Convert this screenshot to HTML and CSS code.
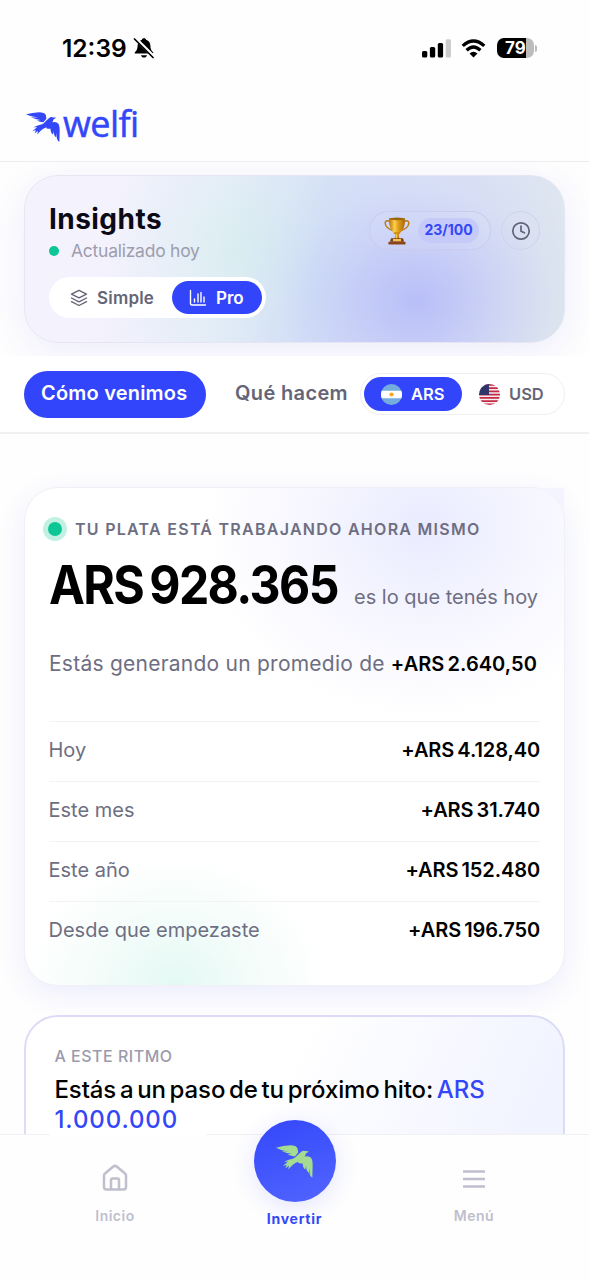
FILE: index.html
```html
<!DOCTYPE html>
<html lang="es">
<head>
<meta charset="utf-8">
<title>welfi</title>
<link rel="stylesheet" href="styles.css">
</head>
<body>
<svg class="defs" width="0" height="0">
  <defs>
    <linearGradient id="gold" x1="0" x2="1"><stop offset="0" stop-color="#b8730b"/><stop offset=".35" stop-color="#fbd04a"/><stop offset=".6" stop-color="#e09a17"/><stop offset="1" stop-color="#a9660a"/></linearGradient>
    <symbol id="bird" viewBox="0 0 110 98">
      <path d="M0 8Q22 2 42 1Q60 1 64 10L66 22L56 34Q46 33 34 28Q40 28 46 26Q30 25 16 17Q26 19 40 19Q16 17 0 8Z"/>
      <path d="M98 19L89 25Q87 32 84 36Q76 40 68 49Q56 53 50 59L36 73L39 62L28 69L32 59L20 63Q32 53 36 49Q30 50 24 50Q38 43 52 40Q58 37 62 32Q70 24 76 19Q81 15 88 18Z"/>
      <path d="M66 47Q76 38 86 34Q98 31 104 38Q109 44 109 60L108 97Q102 94 100 86L99 68L98 83Q91 78 90 70L90 62L87 73Q81 70 80 62L79 54Q74 56 66 53Z"/>
    </symbol>
  </defs>
</svg>
<div class="phone">
  <div class="status">
    <span class="clock">12:39</span>
    <svg class="bell" viewBox="0 0 22 22"><path d="M11 1.200c1.300 0 1.900.7 2.100 1.500c2.900.9 4.200 3 4.300 6 .1 3.200.8 4.600 2.800 6.500v1.300H1.800v-1.300c2-1.900 2.700-3.300 2.800-6.500.1-3 1.400-5.100 4.300-6 .2-.8.8-1.500 2.100-1.500z"/><path d="M8 18.200h6c-.4 1.500-1.500 2.300-3 2.300s-2.600-.8-3-2.300z"/><path d="M2.500 1.500L21 20" stroke="#fff" stroke-width="3.400"/><path d="M1.500 2L20 20.500" stroke="#000" stroke-width="1.700" stroke-linecap="round"/></svg>
    <span class="grow"></span>
    <svg class="signal" viewBox="0 0 29 19"><rect x="0" y="12" width="5.300" height="6.500" rx="1.500"/><rect x="7.900" y="8" width="5.300" height="10.500" rx="1.500"/><rect x="15.800" y="4" width="5.300" height="14.500" rx="1.500"/><rect x="23.700" y="0.300" width="5.300" height="18.200" rx="1.500" fill="#ccc"/></svg>
    <svg class="wifi" viewBox="0 0 24 19"><g fill="none" stroke="#000" stroke-width="3.300"><path d="M1.200 6.900Q12-3 22.800 6.900"/><path d="M5.100 11.200Q12 4.700 18.900 11.200"/></g><path d="M12 18.600L8 14.400Q12 10.900 16 14.400z"/></svg>
    <span class="battery"><b>79</b></span><i class="cap"></i>
  </div>
  <header class="brand">
    <svg class="brandbird"><use href="#bird"/></svg><span class="word">welfi</span>
  </header>
  <section class="hero">
    <div class="insights">
      <div class="heading">
        <div>
          <h1>Insights</h1>
          <p class="updated"><i></i><span>Actualizado hoy</span></p>
        </div>
        <div class="tools">
          <span class="score">
            <svg class="trophy" viewBox="0 0 26 28"><path d="M6 4.500Q1 2.500 1.200 6.500Q2 11.500 9 13.500M20 4.500Q25 2.500 24.800 6.500Q24 11.500 17 13.500" fill="none" stroke="#b97a14" stroke-width="1.500"/><path d="M5 1.500h16q.3 11-5.500 14.500h-5Q4.700 12.500 5 1.500z" fill="url(#gold)"/><ellipse cx="13" cy="1.900" rx="8" ry="1.300" fill="#9c650c"/><path d="M11.500 15.500h3l.8 6.500h-4.600z" fill="url(#gold)"/><rect x="9.500" y="15.300" width="7" height="1.600" rx=".8" fill="#d18a12"/><path d="M7 21.300h12l1 3.500H6z" fill="#7d3c12"/><rect x="9" y="22" width="8" height="2.300" fill="#f3c455"/><rect x="4.500" y="24.700" width="17" height="2.800" rx=".6" fill="#8b451a"/></svg>
            <b>23/100</b>
          </span>
          <span class="history"><svg viewBox="0 0 20 20"><circle cx="10" cy="10" r="8.200"/><path d="M10 5V10.300l3.400 1.500"/></svg></span>
        </div>
      </div>
      <div class="mode">
        <span class="opt simple"><svg viewBox="0 0 18 18"><path d="M9 1.300l7.500 3.800L9 8.900 1.500 5.100zM1.500 9L9 12.800 16.500 9M1.500 12.700L9 16.500l7.500-3.800"/></svg><span>Simple</span></span>
        <span class="opt pro"><svg viewBox="0 0 18 18"><path d="M1.500 1.500v13q0 1.500 1.500 1.500h13.500M5.500 10v3M9 5v8M12 3.500V13M15 8v5"/></svg><span>Pro</span></span>
      </div>
    </div>
  </section>
  <nav class="tabs">
    <span class="tab on">Cómo venimos</span>
    <span class="tab off">Qué hacem</span>
    <div class="currency">
      <span class="cur sel"><svg viewBox="0 0 20 20"><circle cx="10" cy="10" r="10" fill="#74addd"/><path d="M.6 6.500h18.800a10 10 0 0 1 0 7H.6a10 10 0 0 1 0-7z" fill="#fff"/><circle cx="10" cy="10" r="2" fill="#f5a623"/></svg><span>ARS</span></span>
      <span class="cur"><svg viewBox="0 0 20 20"><clipPath id="round"><circle cx="10" cy="10" r="10"/></clipPath><g clip-path="url(#round)"><path fill="#f4eef0" d="M0 0h20v20H0z"/><path d="M0 .8h20M0 3.900h20M0 7h20M0 10.100h20M0 13.200h20M0 16.300h20M0 19.400h20" stroke="#c62a43" stroke-width="1.600"/><path fill="#303569" d="M0 0h9.500v10.500H0z"/></g></svg><span>USD</span></span>
    </div>
  </nav>
  <main>
    <section class="card money">
      <p class="live"><i></i><span>TU PLATA ESTÁ TRABAJANDO AHORA MISMO</span></p>
      <p class="total"><strong>ARS 928.365</strong><span>es lo que tenés hoy</span></p>
      <p class="avg"><span>Estás generando un promedio de</span><b>+ARS 2.640,50</b></p>
      <dl>
        <div><dt>Hoy</dt><dd>+ARS 4.128,40</dd></div>
        <div><dt>Este mes</dt><dd>+ARS 31.740</dd></div>
        <div><dt>Este año</dt><dd>+ARS 152.480</dd></div>
        <div><dt>Desde que empezaste</dt><dd>+ARS 196.750</dd></div>
      </dl>
    </section>
    <section class="card pace">
      <p class="eyebrow">A ESTE RITMO</p>
      <p class="goal">Estás a un paso de tu próximo hito: <em>ARS</em></p>
      <p class="goal amount"><em>1.000.000</em></p>
    </section>
  </main>
  <footer class="dock">
    <div class="item"><svg class="home" viewBox="0 0 26 28"><path d="M2 11.500Q2 10.300 3 9.500L11.300 2.500Q13 1.200 14.700 2.500L23 9.500q1 .8 1 2V23q0 2.500-2.500 2.500h-17Q2 25.500 2 23zM9 25.500V16q0-1.500 1.500-1.500h5q1.500 0 1.500 1.500v9.500"/></svg><span>Inicio</span></div>
    <div class="item invest"><span class="disc"><svg><use href="#bird"/></svg></span><span>Invertir</span></div>
    <div class="item"><svg class="burger" viewBox="0 0 22 18"><path d="M0 1.500h22M0 9h22M0 16.500h22"/></svg><span>Menú</span></div>
  </footer>
</div>
</body>
</html>
```
FILE: styles.css
```css
* { box-sizing: border-box; margin: 0; padding: 0; }
body { width: 589px; height: 1280px; overflow: hidden; background: #fefefe; font-family: Inter, "Liberation Sans", sans-serif; color: #0b0b18; white-space: nowrap; }
.defs { position: absolute; }
.phone { display: flex; flex-direction: column; height: 1280px; }

.status { display: flex; align-items: center; height: 96px; padding: 0 52px 0 62px; }
.clock { font-size: 24.500px; font-weight: 600; color: #000; }
.bell { width: 22px; height: 22px; margin-left: 6px; }
.grow { flex: 1; }
.signal { width: 29px; height: 19px; }
.wifi { width: 25px; height: 19px; margin: 0 11px 0 10px; }
.battery { display: flex; width: 37px; height: 20px; border-radius: 7px; background: linear-gradient(90deg, #000 78%, #bcbcbc 78%); color: #fff; font-size: 17px; line-height: 20px; justify-content: center; }
.cap { width: 2px; height: 7px; margin-left: 1px; border-radius: 0 2px 2px 0; background: #bcbcbc; }

.brand { display: flex; height: 66px; padding: 14px 26px 0; border-bottom: 1px solid #ececef; color: #3347f8; }
.brandbird { width: 34px; height: 34px; fill: #3347f8; }
.word { margin-left: 3px; font: 500 36px/27px "Open Sans", sans-serif; letter-spacing: -.6px; -webkit-text-stroke: .5px #3347f8; }

.hero { height: 194px; padding: 13px 24px; overflow: hidden; }
.insights { height: 168px; padding: 27px 24px 0; border: 1px solid #e6e6f3; border-radius: 34px; background: radial-gradient(ellipse 180px 150px at 392px 125px, rgba(145,150,250,.45), rgba(160,165,250,.24) 45%, rgba(170,175,250,.07) 75%, transparent), radial-gradient(ellipse 130px 150px at 215px 75px, rgba(205,240,232,.5), rgba(205,240,232,.2) 50%, transparent), linear-gradient(100deg, #f4f2fd 15%, #e9edfa 36%, #d6e0f7 54%, #dae1f5 78%, #dfe7ee 100%); box-shadow: 0 8px 36px rgba(80,80,240,.1); }
.heading { display: flex; justify-content: space-between; }
h1 { font-size: 28px; line-height: 32px; letter-spacing: .45px; }
.updated { display: flex; align-items: center; gap: 12px; height: 31px; font-size: 17.500px; letter-spacing: -.25px; color: #9d9dae; }
.updated i { width: 10px; height: 10px; border-radius: 50%; background: #0cc795; }
.tools { display: flex; gap: 10px; padding-top: 8px; }
.score { display: flex; align-items: center; gap: 8px; width: 122px; height: 39px; padding-left: 14px; border: 1px solid #c9ccee; border-radius: 20px; background: rgba(255,255,255,.06); }
.trophy { width: 26px; height: 28px; }
.score b { width: 61px; height: 25px; border-radius: 13px; background: #c5caf9; color: #3347f8; font-size: 14px; line-height: 24px; text-align: center; }
.history { display: flex; align-items: center; justify-content: center; width: 39px; height: 39px; border: 1px solid #cfd3e8; border-radius: 50%; }
.history svg { width: 20px; height: 20px; fill: none; stroke: #626276; stroke-width: 1.700; stroke-linecap: round; }
.mode { display: flex; width: 217px; height: 41px; margin-top: 11px; padding: 4px; border-radius: 21px; background: #fff; }
.opt { display: flex; align-items: center; gap: 9px; height: 33px; font-size: 17px; font-weight: 600; color: #656577; }
.opt svg { width: 18px; height: 18px; fill: none; stroke: currentColor; stroke-width: 1.400; stroke-linejoin: round; stroke-linecap: round; }
.simple { width: 119px; padding-left: 17px; letter-spacing: .2px; }
.pro { width: 90px; padding-left: 17px; border-radius: 17px; background: #3245fb; color: #fff; }

.tabs { display: flex; align-items: center; height: 78px; padding: 0 24px; border-bottom: 2px solid #f0f0f2; background: #fff; }
.tab { height: 47px; font-size: 20px; line-height: 45px; font-weight: 600; color: #656577; letter-spacing: .35px; }
.on { width: 182px; padding-left: 17px; border-radius: 24px; background: #3245fb; color: #fff; letter-spacing: .2px; }
.off { width: 125px; margin-left: 29px; }
.currency { display: flex; width: 205px; height: 42px; padding: 3px; border: 1px solid #efeff3; border-radius: 21px; }
.cur { display: flex; align-items: center; gap: 9px; height: 34px; padding-left: 17px; font-size: 16.500px; font-weight: 600; color: #656577; }
.cur svg { width: 21px; height: 21px; }
.sel { width: 98px; border-radius: 17px; background: #3245fb; color: #fff; }

main { display: flex; flex-direction: column; gap: 29px; padding: 53px 24px 0; height: 700px; overflow: hidden; }
.card { flex: none; border-radius: 34px; }
.money { position: relative; height: 499px; padding: 29px 24px 0; border: 1px solid #f0f0f7; background: radial-gradient(ellipse 150px 130px at 150px 100%, rgba(12,199,149,.11), rgba(12,199,149,.04) 60%, transparent), radial-gradient(ellipse 220px 190px at 400px 40px, rgba(60,70,250,.11), rgba(60,70,250,.045) 55%, transparent), #fff; box-shadow: 0 8px 28px rgba(80,80,240,.1); }
.money::after { content: ""; position: absolute; top: 0; right: 0; width: 34px; height: 34px; background: radial-gradient(circle at 0 100%, transparent 33px, #f3f4fe 34px); }
.live { display: flex; align-items: center; gap: 13px; height: 24px; margin-left: -1px; font-size: 16px; font-weight: 600; color: #6e6e82; letter-spacing: 1.270px; }
.live i { width: 14px; height: 14px; border-radius: 50%; background: #0cc795; box-shadow: 0 0 0 5px rgba(12,199,149,.25); }
.total { display: flex; align-items: baseline; height: 66px; margin-top: 11px; }
.total strong { width: 305px; font-size: 53px; line-height: 66px; font-weight: 750; letter-spacing: -1.800px; word-spacing: -4px; color: #000; transform: scaleX(.908); transform-origin: 0 0; }
.total span { font-size: 20px; color: #6e6e82; }
.avg { display: flex; margin-top: 32px; height: 28px; line-height: 28px; font-size: 21px; letter-spacing: .24px; color: #6e6e82; align-items: baseline; }
.avg b { margin-left: 6px; font-size: 20px; font-weight: 600; letter-spacing: .05px; word-spacing: -2px; color: #000; }
dl { margin-top: 43px; }
dl div { display: flex; justify-content: space-between; height: 60px; border-top: 1px solid #f3f3f6; line-height: 57px; }
dt { margin-left: -.5px; font-size: 20px; color: #6e6e82; }
dd { font-size: 20px; font-weight: 600; letter-spacing: -.1px; word-spacing: -1.800px; color: #000; }
.pace { height: 200px; padding: 27px 28.500px 0; border: 2px solid #dcdcf7; background: linear-gradient(115deg, #fff 45%, #f1f3ff 90%); }
.eyebrow { height: 24px; font-size: 16px; line-height: 24px; font-weight: 500; letter-spacing: .5px; color: #9b9bac; }
.goal { width: max-content; height: 30px; margin-top: 7px; font-size: 24px; line-height: 30px; font-weight: 550; letter-spacing: -.12px; word-spacing: -2.500px; color: #000; }
.amount { width: 156px; height: 34px; margin: 0 0 0 -5px; padding-left: 5px; background: #fff; letter-spacing: .9px; }
.goal em { font-style: normal; color: #3347f8; }

.dock { position: relative; display: flex; justify-content: space-between; height: 146px; padding: 0 65px; border-top: 1px solid #f1f1f4; background: #fefefe; }
.dock::before { content: ""; position: absolute; left: 50px; top: -1px; width: 156px; height: 2px; background: #fff; }
.item { display: flex; flex-direction: column; align-items: center; width: 100px; font-size: 14px; font-weight: 600; letter-spacing: .5px; color: #bfbfce; }
.item > svg { fill: none; stroke: currentColor; }
.home { width: 26px; height: 28px; margin: 29px 0 15px; stroke-width: 2.500; }
.burger { width: 22px; height: 18px; margin: 35px 0 19px; stroke-width: 2.500; }
.invest { color: #3347f8; font-weight: 700; letter-spacing: .75px; }
.disc { display: flex; flex: none; align-items: center; justify-content: center; width: 82px; height: 82px; margin: -15px 0 8px; border-radius: 50%; background: linear-gradient(160deg, #3347fb, #5265ff); box-shadow: 0 5px 24px rgba(60,70,250,.14); }
.disc svg { width: 37px; height: 33px; fill: #a5dc91; }
```
